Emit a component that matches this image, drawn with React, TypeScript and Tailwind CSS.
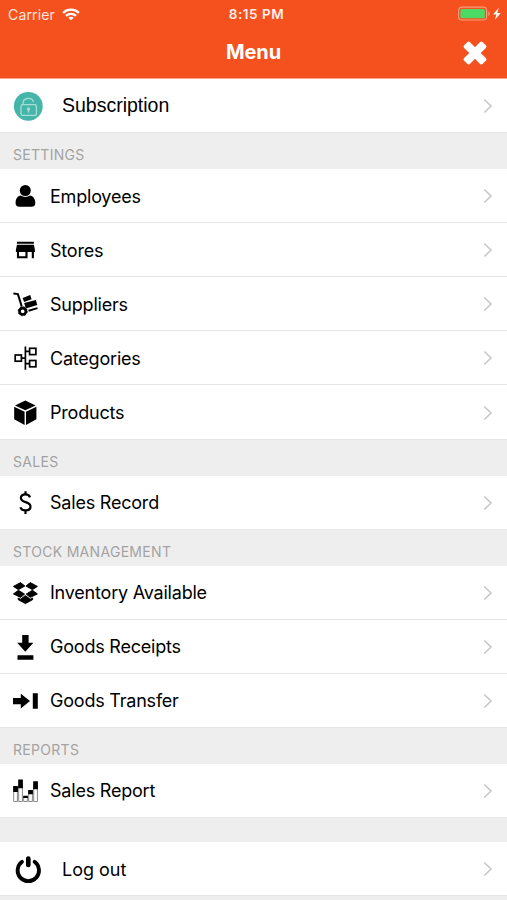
import type { ReactNode } from 'react';

type Item = { label: string; icon: ReactNode; text?: string; wide?: boolean };
type Section = { title: string; items: Item[] };

const icons = {
  subscription: (
    <>
      <circle cx="18.3" cy="16.3" r="14.4" fill="#45b5aa" />
      <g fill="none" stroke="#a9ded8" strokeWidth="1.3" strokeLinecap="round">
        <rect x="11" y="14.6" width="15.4" height="10.8" rx="1.6" />
        <path d="M13.2 14.5v-1.8c0-5.1 9-6 10-1.2" />
        <circle cx="18.5" cy="19" r="1" />
        <path d="M18.5 20.2v1.8" />
      </g>
    </>
  ),
  employees: (
    <>
      <circle cx="15.3" cy="10.5" r="5.5" />
      <path d="M10.8 15.6c2.500 1.700 6.500 1.700 9 0 3.500.4 5.500 3.400 5.500 7.600 0 2.200-1.300 3.500-3.600 3.500H9.200c-2.300 0-3.600-1.300-3.600-3.500 0-4.200 1.800-7.200 5.200-7.600z" />
    </>
  ),
  stores: (
    <path
      transform="translate(2.7 3.6) scale(1.06 1.03)"
      d="M20 4H4v2h16V4zm1 10v-2l-1-5H4l-1 5v2h1v6h10v-6h4v6h2v-6h1zm-9 4H6v-4h6v4z"
    />
  ),
  suppliers: (
    <>
      <path d="M3.400 5.600l4.500.5 3.900 12.500" fill="none" stroke="currentColor" strokeWidth="2" />
      <path d="M12.600 9.900l7.600-2.800 1.400 4.200-7.500 2.600z" />
      <path d="M14.200 14.900l11.600-2.900 1.500 5.100-11.500 3.500z" />
      <path d="M18.500 22.700l9-2.600" stroke="currentColor" strokeWidth="2" />
      <circle cx="12.700" cy="23.300" r="3.200" fill="none" stroke="currentColor" strokeWidth="2.700" />
      <circle cx="12.700" cy="23.300" r="4.500" fill="none" stroke="currentColor" strokeWidth="1" strokeDasharray="1.700 1.834" />
    </>
  ),
  categories: (
    <g fill="none" stroke="currentColor" strokeWidth="1.700">
      <rect x="5.200" y="13" width="6.200" height="6.200" />
      <rect x="19.600" y="6.300" width="6.300" height="6.300" />
      <rect x="19.600" y="18.500" width="6.300" height="6.300" />
      <path d="M11.400 16.100h4M15.400 4.400v23.400M15.400 9.400h4.200M15.400 21.700h4.200" />
    </g>
  ),
  products: (
    <>
      <path d="M15.300 3.600l10.300 4.800-10.300 4.900L5 8.400z" />
      <path d="M4.200 9.800l10.400 4.900v13.200L4.200 22.300zM26.400 9.800L16 14.700v13.200l10.400-5.600z" />
    </>
  ),
  dollar: (
    <g fill="none" stroke="currentColor" strokeWidth="2.200">
      <path d="M20 10.300c-.6-1.900-2.200-2.900-4.500-2.900-2.800 0-4.600 1.400-4.600 3.600 0 5.200 9.600 3.100 9.600 8.500 0 2.500-2.100 3.900-4.800 3.900s-4.700-1.100-5.200-3.200" />
      <path d="M15.500 4.300v3.500M15.500 23.300v3.700" />
    </g>
  ),
  inventory: (
    <path
      stroke="currentColor"
      strokeWidth=".9"
      strokeLinejoin="round"
      d="M10.500 5.600l4.400 3.400-6.500 3.700L3.400 9.400zM20.300 5.600L15.900 9l6.500 3.700 5-3.300zM3.400 16.900l5-3.600 6.200 3.800-4.100 3.300zM22.400 13.300l5 3.600-7.100 3.500-4.100-3.300zM15.400 18.600l4.900 3.600 2.300-1.200v1.700l-7.200 3.900-7.200-3.900V21l2.300 1.200z"
    />
  ),
  receipts: <path d="M12.200 4h6.400v7.700h4.800l-8.100 9.100-8.100-9.100h5zM7.500 24.200h15.900v4.500H7.500z" />,
  transfer: <path d="M3 12.900h7.800V8.800l9.200 7.300-9.200 7.300v-4.100H3zM22.800 8.300h5v15.400h-5z" />,
  report: (
    <>
      <g fill="#fff" stroke="#888" strokeWidth="1">
        <path d="M3.700 12h3.700v14.500H3.700zM8.700 10h3.700v16.500H8.700zM13.700 22h3.700v4.500h-3.700zM18.700 16h3.700v10.500h-3.700zM23.700 10h3.700v16.500h-3.700z" />
      </g>
      <path d="M3.200 10.900h4.700v6H3.200zM8.200 4.500h4.700v8.800H8.200zM13.200 20.700h4.700v2.400h-4.700zM18.200 14.900h4.700v4.300h-4.700zM23.200 6.200h4.700v8h-4.700z" />
    </>
  ),
  logout: (
    <g fill="none" stroke="currentColor">
      <path d="M12 8.800a10.700 10.700 0 1 0 12.600 0" strokeWidth="3.800" strokeLinecap="round" />
      <path d="M18.300 5.700v6.200" strokeWidth="4.700" strokeLinecap="round" />
    </g>
  ),
};

const sections: Section[] = [
  {
    title: 'SETTINGS',
    items: [
      { label: 'Employees', icon: icons.employees },
      { label: 'Stores', icon: icons.stores },
      { label: 'Suppliers', icon: icons.suppliers },
      { label: 'Categories', icon: icons.categories },
      { label: 'Products', icon: icons.products },
    ],
  },
  { title: 'SALES', items: [{ label: 'Sales Record', icon: icons.dollar }] },
  {
    title: 'STOCK MANAGEMENT',
    items: [
      { label: 'Inventory Available', icon: icons.inventory },
      { label: 'Goods Receipts', icon: icons.receipts },
      { label: 'Goods Transfer', icon: icons.transfer },
    ],
  },
  { title: 'REPORTS', items: [{ label: 'Sales Report', icon: icons.report }] },
];

function MenuRow({ label, icon, text = 'text-[18px] tracking-[-0.21px]', wide }: Item) {
  return (
    <button className="flex h-[54.1px] w-full shrink-0 items-center border-b border-[#e6e6e6] bg-white pl-[10px] pr-[14px] pt-px text-left text-black">
      <svg viewBox="0 0 32 32" className="h-8 w-8 shrink-0 overflow-visible" fill="currentColor">
        {icon}
      </svg>
      <span className={`flex-1 whitespace-nowrap ${wide ? 'pl-5' : 'pl-2'} ${text}`}>{label}</span>
      <svg viewBox="0 0 10 16" className="h-4 w-[10px]" fill="none" stroke="#c7c7cc" strokeWidth="1.6">
        <path d="M1.300 1.500L8 8l-6.700 6.500" />
      </svg>
    </button>
  );
}

export default function App() {
  return (
    <div className="flex h-[900px] w-[507px] flex-col overflow-hidden bg-[#eee] font-['Inter',sans-serif]">
      <header className="h-[79px] shrink-0 border-b border-[#f9a487] bg-[#f5511e] text-white">
        {/* Status bar */}
        <div className="grid h-7 grid-cols-3 items-center pl-2 pr-[5px] text-[13.500px]">
          <div className="flex items-center gap-[7px] text-[#ffe5dc]">
            <span className="text-[14px] tracking-[0.15px]">Carrier</span>
            <svg viewBox="0 0 18 13" className="h-[13px] w-[18px]" fill="none" stroke="#fff" strokeWidth="2.300">
              <path d="M1.100 4.800c4.400-4.200 11.400-4.200 15.800 0M4 7.800c2.800-2.700 7.200-2.700 10 0" />
              <path d="M9 12.300L6.300 9.800c1.500-1.300 3.900-1.300 5.400 0z" fill="#fff" stroke="none" />
            </svg>
          </div>
          <span className="pl-[3px] text-center font-semibold tracking-[0.55px] text-[#ffefe8]">8:15 PM</span>
          <svg viewBox="0 0 44 16" className="h-4 w-11 justify-self-end">
            <rect x=".6" y="1.200" width="28" height="12.800" rx="3.200" fill="none" stroke="#f99b7b" strokeWidth="1.200" />
            <rect x="2.400" y="3" width="24.400" height="9.200" rx="1.500" fill="#4cd964" />
            <path d="M30.300 5.500c2 .7 2 3.700 0 4.400z" fill="#f99b7b" />
            <path d="M40.800 1.800l-5.800 6.800h3.400l-1.500 5.200 5.900-6.900h-3.500z" fill="#fff" />
          </svg>
        </div>
        <div className="grid h-[50px] grid-cols-[1fr_auto_1fr] items-center pr-5">
          <span />
          <h1 className="pb-[2px] pl-5 text-[20px] font-bold tracking-[-0.1px]">Menu</h1>
          <svg viewBox="0 0 24 24" className="h-6 w-6 justify-self-end overflow-visible" fill="#fff">
            <path d="M4.500.900Q5.700 0 6.900 1.100L12 6.300l5.100-5.200Q18.300 0 19.500.900l3.600 3.600q.9 1.200-.2 2.400L17.700 12l5.200 5.100q1.100 1.200.2 2.400l-3.600 3.600q-1.200.9-2.400-.2L12 17.700l-5.100 5.200q-1.200 1.100-2.400.2L.9 19.500q-.9-1.200.2-2.400L6.300 12 1.100 6.900Q0 5.700.9 4.500z" />
          </svg>
        </div>
      </header>

      <MenuRow
        label="Subscription"
        icon={icons.subscription}
        wide
        text="font-['Liberation_Sans',sans-serif] text-[19.500px]"
      />

      {sections.map((section) => (
        <section key={section.title} className="shrink-0">
          <h2 className="flex h-9 items-end pb-[4px] pl-[13px] text-[14px] tracking-[0.3px] text-[#a3a3a3]">
            {section.title}
          </h2>
          {section.items.map((item) => (
            <MenuRow key={item.label} {...item} />
          ))}
        </section>
      ))}

      <div className="h-6 shrink-0" />
      <MenuRow label="Log out" icon={icons.logout} wide text="text-[18px]" />
    </div>
  );
}
